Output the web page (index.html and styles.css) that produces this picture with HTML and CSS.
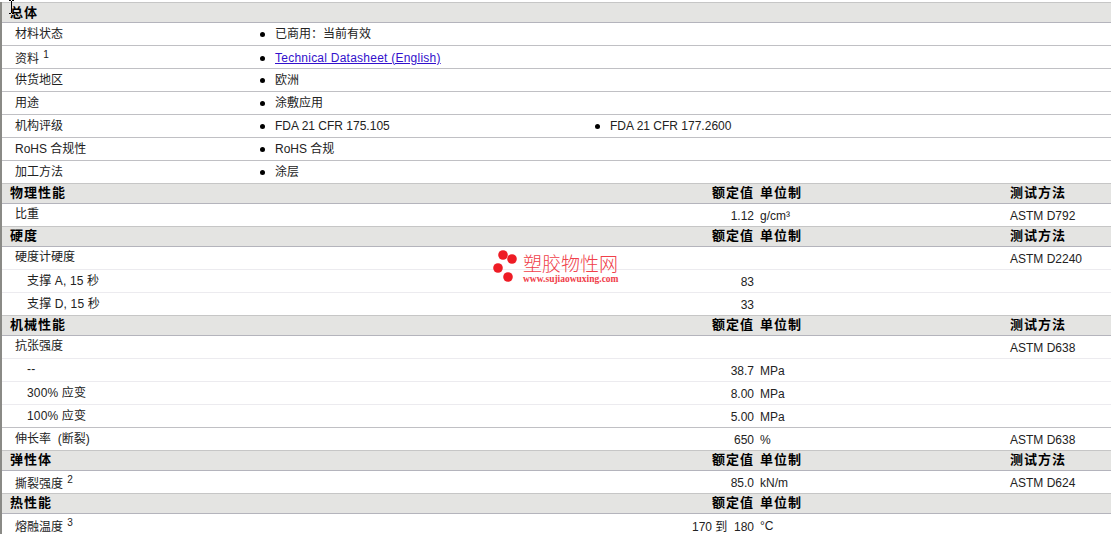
FILE: index.html
```html
<!DOCTYPE html>
<html lang="zh">
<head>
<meta charset="utf-8">
<title>塑胶物性</title>
<link rel="stylesheet" href="styles.css">
</head>
<body>
<svg class="cursor" width="7" height="14" viewBox="0 0 7 14"><path d="M1 0.5h2M4 0.5h2M3.5 1v12M1 13.5h2M4 13.5h2" stroke="#000" fill="none"/></svg>
<div class="sheet">
  <div class="row head"><span class="title">总体</span></div>
  <div class="row"><span class="label">材料状态</span><ul class="vals"><li>已商用：当前有效</li></ul></div>
  <div class="row"><span class="label noted">资料 <sup>1</sup></span><ul class="vals"><li class="linked"><a href="#">Technical Datasheet (English)</a></li></ul></div>
  <div class="row"><span class="label">供货地区</span><ul class="vals"><li>欧洲</li></ul></div>
  <div class="row"><span class="label">用途</span><ul class="vals"><li>涂敷应用</li></ul></div>
  <div class="row"><span class="label">机构评级</span><ul class="vals fda"><li>FDA 21 CFR 175.105</li><li>FDA 21 CFR 177.2600</li></ul></div>
  <div class="row"><span class="label">RoHS 合规性</span><ul class="vals"><li>RoHS 合规</li></ul></div>
  <div class="row"><span class="label">加工方法</span><ul class="vals"><li>涂层</li></ul></div>

  <div class="row head"><span class="title">物理性能</span><span class="num">额定值</span><span class="unit">单位制</span><span class="test">测试方法</span></div>
  <div class="row"><span class="label high">比重</span><span class="num">1.12</span><span class="unit">g/cm³</span><span class="test">ASTM D792</span></div>

  <div class="row head"><span class="title">硬度</span><span class="num">额定值</span><span class="unit">单位制</span><span class="test">测试方法</span></div>
  <div class="row sub-next"><span class="label high">硬度计硬度</span><span class="num"></span><span class="unit"></span><span class="test">ASTM D2240</span></div>
  <div class="row sub-next"><span class="label deep">支撑 A, 15 秒</span><span class="num">83</span></div>
  <div class="row"><span class="label deep">支撑 D, 15 秒</span><span class="num">33</span></div>

  <div class="row head"><span class="title">机械性能</span><span class="num">额定值</span><span class="unit">单位制</span><span class="test">测试方法</span></div>
  <div class="row sub-next"><span class="label high">抗张强度</span><span class="num"></span><span class="unit"></span><span class="test">ASTM D638</span></div>
  <div class="row sub-next"><span class="label deep">--</span><span class="num">38.7</span><span class="unit">MPa</span></div>
  <div class="row sub-next"><span class="label deep">300% 应变</span><span class="num">8.00</span><span class="unit">MPa</span></div>
  <div class="row"><span class="label deep">100% 应变</span><span class="num">5.00</span><span class="unit">MPa</span></div>
  <div class="row"><span class="label">伸长率&nbsp; (断裂)</span><span class="num">650</span><span class="unit">%</span><span class="test">ASTM D638</span></div>

  <div class="row head"><span class="title">弹性体</span><span class="num">额定值</span><span class="unit">单位制</span><span class="test">测试方法</span></div>
  <div class="row"><span class="label noted">撕裂强度 <sup>2</sup></span><span class="num">85.0</span><span class="unit">kN/m</span><span class="test">ASTM D624</span></div>

  <div class="row head"><span class="title">热性能</span><span class="num">额定值</span><span class="unit">单位制</span></div>
  <div class="row"><span class="label noted">熔融温度 <sup>3</sup></span><span class="num">170 到&nbsp; 180</span><span class="unit">°C</span></div>
</div>
<div class="mark">
  <svg width="26" height="32" viewBox="0 0 26 32"><circle cx="10" cy="5" r="4.800" fill="#ee1c25"/><circle cx="19" cy="9" r="4.800" fill="#ee1c25"/><circle cx="5" cy="18" r="4.800" fill="#ee1c25"/><circle cx="15" cy="27" r="4.800" fill="#ee1c25"/></svg>
  <div class="mark-text"><span class="mark-cn">塑胶物性网</span><span class="mark-en">www.sujiaowuxing.com</span></div>
</div>
</body>
</html>
```
FILE: styles.css
```css
html, body { margin: 0; padding: 0; background: #fff; overflow: hidden; }
body {
  height: 534px;
  position: relative;
  font-family: "Liberation Sans", "Noto Sans CJK SC", sans-serif;
  font-size: 12px;
  color: #222;
}
.sheet {
  margin-top: 2px;
  border-left: 2px solid #8a8a86;
  height: 532px;
  overflow: hidden;
}
.row {
  display: flex;
  align-items: center;
  height: 22px;
  border-bottom: 1px solid #c0c0c4;
}
.row.sub-next { border-bottom-color: #ecebef; }
.row.head {
  height: 15px;
  background: #e4e4e2;
  border-top: 1px solid #c6c6c6;
  border-bottom: 1px solid #b4b4bc;
  font-weight: bold;
  color: #000;
  font-size: 13px;
  letter-spacing: 1px;
  margin-top: -1px;
  padding-bottom: 4px;
}
.row.head:first-child { margin-top: 0; height: 17px; padding-bottom: 2px; }
.label { width: 245px; padding-left: 13px; flex: none; box-sizing: border-box; white-space: nowrap; }
.label.deep { padding-left: 25px; letter-spacing: 0.15px; }
.title { width: 245px; padding-left: 8px; box-sizing: border-box; flex: none; }
.vals { display: flex; margin: 0; padding: 0; list-style: none; }
.vals li { width: 335px; padding-left: 28px; box-sizing: border-box; position: relative; flex: none; }
.vals li::before {
  content: "";
  position: absolute;
  left: 13px;
  top: 8px;
  width: 5px;
  height: 5px;
  border-radius: 50%;
  background: #000;
}
.vals li.linked::before { top: 5px; }
.vals.fda li::before { top: 5px; }
.vals a { color: #3311cc; letter-spacing: 0.24px; }
sup { font-size: 10px; line-height: 0; vertical-align: 5px; margin-left: 1px; }
.num { width: 507px; flex: none; text-align: right; white-space: nowrap; }
.head .num { width: 508px; padding-right: 1px; box-sizing: border-box; }
.unit { width: 250px; padding-left: 6px; box-sizing: border-box; flex: none; }
.head .unit { width: 249px; padding-left: 5px; }
.test { flex: none; white-space: nowrap; padding-left: 6px; }
.row:not(.head) .num, .row:not(.head) .unit, .row:not(.head) .test { padding-top: 1px; }
.row:not(.head) .label, .row:not(.head) .vals { padding-bottom: 3px; }
.row:not(.head) .label.high { padding-bottom: 5px; }
.row:not(.head) .label.noted { padding-bottom: 0; padding-top: 1px; }
.row:not(.head) .vals:has(.linked) { padding-bottom: 0; padding-top: 1px; }
.row:not(.head) .vals.fda { padding-bottom: 0; }
.cursor { position: absolute; left: 8px; top: 0; }
.mark {
  position: absolute;
  left: 493px;
  top: 250px;
  display: flex;
  align-items: flex-start;
  gap: 4px;
}
.mark-text { display: flex; flex-direction: column; padding-top: 5px; }
.mark-cn { font-size: 19px; line-height: 19px; color: #f0404a; white-space: nowrap; font-weight: 300; }
.mark-en { font-family: "Liberation Serif", serif; font-size: 9.5px; line-height: 10px; font-weight: bold; color: #f0404a; white-space: nowrap; }
```
